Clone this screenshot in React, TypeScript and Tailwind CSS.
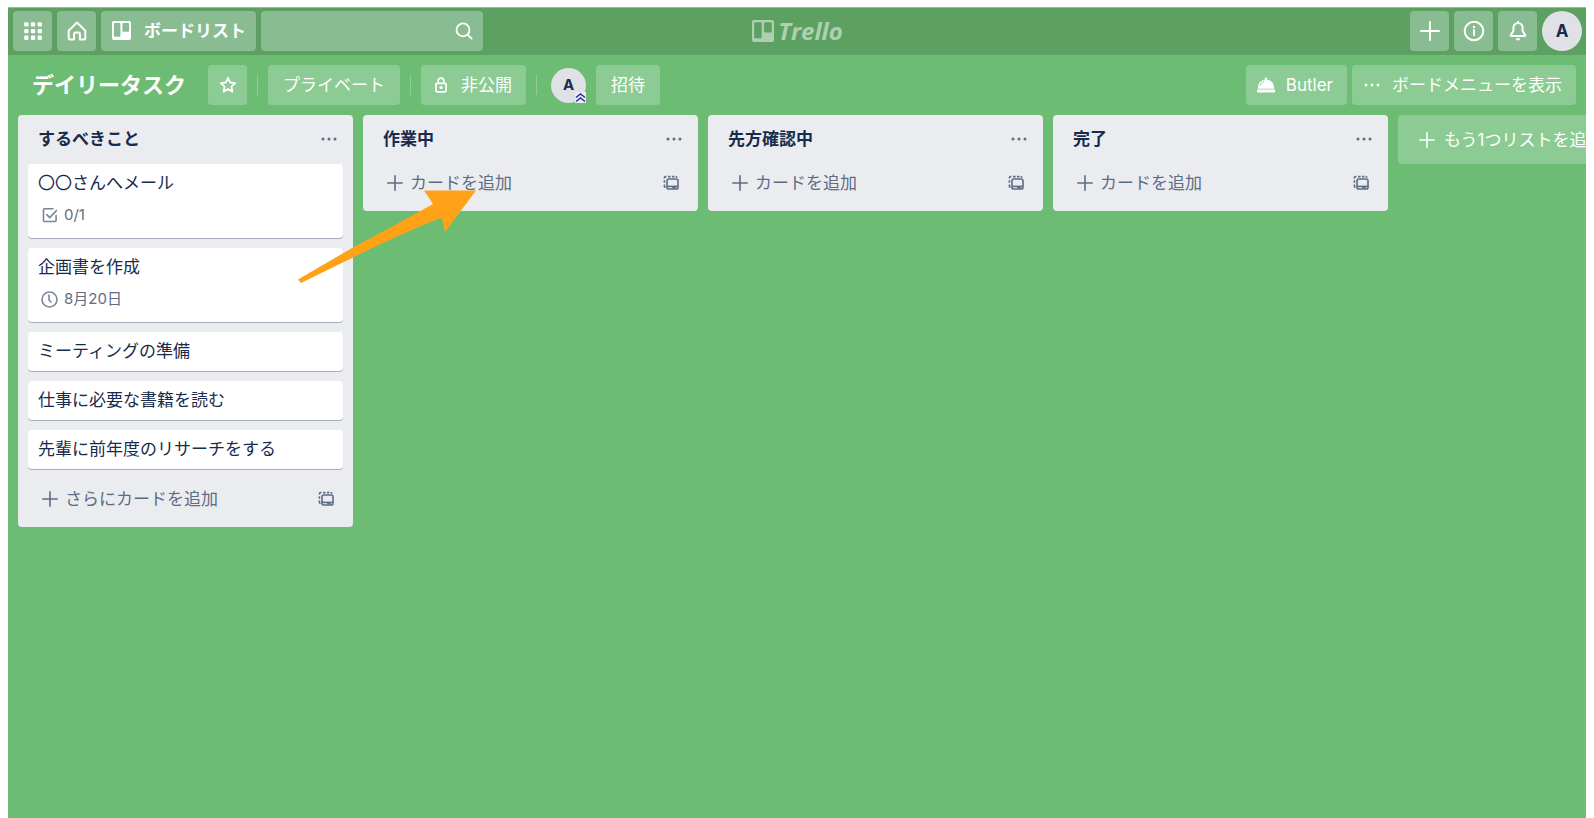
import React from 'react';

type IconProps = { className?: string };

type Card = { title: string; badge?: 'check' | 'clock'; badgeText?: string };
type List = { title: string; cards: Card[]; addLabel: string };

const lists: List[] = [
  {
    title: 'するべきこと',
    addLabel: 'さらにカードを追加',
    cards: [
      { title: '〇〇さんへメール', badge: 'check', badgeText: '0/1' },
      { title: '企画書を作成', badge: 'clock', badgeText: '8月20日' },
      { title: 'ミーティングの準備' },
      { title: '仕事に必要な書籍を読む' },
      { title: '先輩に前年度のリサーチをする' },
    ],
  },
  { title: '作業中', addLabel: 'カードを追加', cards: [] },
  { title: '先方確認中', addLabel: 'カードを追加', cards: [] },
  { title: '完了', addLabel: 'カードを追加', cards: [] },
];

function GridIcon() {
  return (
    <svg className="size-[18px]" viewBox="0 0 18 18" fill="currentColor" aria-hidden="true">
      {[0, 6.7, 13.4].map((y) =>
        [0, 6.7, 13.4].map((x) => <rect key={`${x}-${y}`} x={x + 0.2} y={y + 0.2} width="4.3" height="4.3" rx="1" />),
      )}
    </svg>
  );
}

function HomeIcon() {
  return (
    <svg className="size-5" viewBox="0 0 20 20" fill="none" stroke="currentColor" strokeWidth="2" strokeLinejoin="round" strokeLinecap="round" aria-hidden="true">
      <path d="M1.7 9.6 10 1.500l8.300 8.100v7.400q0 1.500-1.500 1.500h-3.900v-5.600q0-1.500-1.500-1.500H8.600q-1.500 0-1.500 1.500v5.600H3.200q-1.500 0-1.500-1.500z" />
    </svg>
  );
}

function BoardIcon({ className }: IconProps) {
  return (
    <svg className={className} viewBox="0 0 24 24" fill="currentColor" fillRule="evenodd" aria-hidden="true">
      <path d="M2.2 0h19.6A2.200 2.200 0 0 1 24 2.200v19.600a2.200 2.200 0 0 1-2.200 2.200H2.200A2.200 2.200 0 0 1 0 21.800V2.200A2.200 2.200 0 0 1 2.200 0zM3.400 2.400a1 1 0 0 0-1 1v15.600a1 1 0 0 0 1 1h6.200a1 1 0 0 0 1-1V3.400a1 1 0 0 0-1-1zM14.200 2.400a1 1 0 0 0-1 1v9.200a1 1 0 0 0 1 1h6.400a1 1 0 0 0 1-1V3.400a1 1 0 0 0-1-1z" />
    </svg>
  );
}

function SearchIcon() {
  return (
    <svg className="size-5" viewBox="0 0 20 20" fill="none" stroke="currentColor" strokeWidth="2" strokeLinecap="round" aria-hidden="true">
      <circle cx="8.800" cy="8.800" r="7.100" />
      <path d="m14 14 4.300 4.300" />
    </svg>
  );
}

function PlusIcon({ className }: IconProps) {
  return (
    <svg className={className} viewBox="0 0 20 20" fill="none" stroke="currentColor" strokeWidth="2" strokeLinecap="round" aria-hidden="true">
      <path d="M10 1v18M1 10h18" />
    </svg>
  );
}

function InfoIcon() {
  return (
    <svg className="size-[22px]" viewBox="0 0 22 22" fill="none" stroke="currentColor" strokeWidth="2" strokeLinecap="round" aria-hidden="true">
      <circle cx="11" cy="11" r="9.300" />
      <path d="M11 10v5" />
      <circle cx="11" cy="7" r="1.200" fill="currentColor" stroke="none" />
    </svg>
  );
}

function BellIcon() {
  return (
    <svg className="size-5" viewBox="0 0 20 20" fill="none" stroke="currentColor" strokeWidth="2" strokeLinejoin="round" strokeLinecap="round" aria-hidden="true">
      <path d="M10 2a4.600 4.600 0 0 0-4.600 4.600v3.600L3 13.600q-.7 1.300.6 1.300h12.800q1.300 0 .6-1.300l-2.400-3.400V6.600A4.600 4.600 0 0 0 10 2z" />
      <path d="M10 .6v1.200" />
      <path d="M7.800 17.300h4.400a2.200 2.200 0 0 1-4.400 0z" fill="currentColor" stroke="none" />
    </svg>
  );
}

function StarIcon() {
  return (
    <svg className="size-[18px]" viewBox="0 0 18 18" fill="none" stroke="currentColor" strokeWidth="1.800" strokeLinejoin="round" aria-hidden="true">
      <path d="m9 1.800 2.100 4.700 5.100.6-3.800 3.500 1 5L9 13.100l-4.400 2.500 1-5L1.800 7.100l5.100-.6z" />
    </svg>
  );
}

function LockIcon() {
  return (
    <svg className="h-4 w-3" viewBox="0 0 12 16" fill="none" stroke="currentColor" strokeWidth="1.700" aria-hidden="true">
      <rect x=".9" y="6.400" width="10.200" height="8.400" rx="1.200" />
      <path d="M3.100 6.400V4a2.900 2.900 0 0 1 5.800 0v2.400" />
      <circle cx="6" cy="10.600" r="1.600" fill="currentColor" stroke="none" />
    </svg>
  );
}

function ButlerIcon() {
  return (
    <svg className="h-4 w-[18px]" viewBox="0 0 18 16" fill="currentColor" aria-hidden="true">
      <circle cx="9" cy="1.700" r="1.300" />
      <path d="M.8 11.700C.8 6 4.200 2.600 9 2.600s8.200 3.400 8.200 9.100z" />
      <rect x="0" y="12.500" width="18" height="3" rx=".5" />
      <path d="M3 8.400q1-3.200 3.800-4.300" fill="none" stroke="#8ccb93" strokeWidth=".9" strokeLinecap="round" />
    </svg>
  );
}

function DotsIcon() {
  return (
    <svg className="h-1 w-4" viewBox="0 0 16 4" fill="currentColor" aria-hidden="true">
      <circle cx="2" cy="2" r="1.500" />
      <circle cx="8" cy="2" r="1.500" />
      <circle cx="14" cy="2" r="1.500" />
    </svg>
  );
}

function TemplateIcon() {
  return (
    <svg className="size-4" viewBox="0 0 16 16" fill="none" stroke="currentColor" strokeWidth="1.600" aria-hidden="true">
      <rect x="4" y="4" width="11" height="10" rx="1.800" />
      <path d="M4 11.400h11" />
      <path d="M9.200 12.600h3.600" strokeWidth="2" />
      <path d="M1.400 3.600V2.800Q1.400 1.600 2.600 1.600H3.400M5 1.600h2.600M9 1.600h2.400M1.400 5.200v2.600M1.400 9.400v2q0 .9 1.200.9M12.600 1.600q1.200 0 1.200 1.200" />
    </svg>
  );
}

function CheckIcon() {
  return (
    <svg className="size-4" viewBox="0 0 16 16" fill="none" stroke="currentColor" strokeWidth="1.600" strokeLinecap="round" strokeLinejoin="round" aria-hidden="true">
      <path d="M11 1.800H2.500q-1 0-1 1v10.700q0 1 1 1h10.600q1 0 1-1V8.600" />
      <path d="m4.800 7.600 2.900 3 6.700-7" />
    </svg>
  );
}

function ClockIcon() {
  return (
    <svg className="size-[17px]" viewBox="0 0 17 17" fill="none" stroke="currentColor" strokeWidth="1.600" strokeLinecap="round" strokeLinejoin="round" aria-hidden="true">
      <circle cx="8.500" cy="8.500" r="7.500" />
      <path d="M8 4v5l2 2" />
    </svg>
  );
}

function IconButton({ label, children }: { label: string; children: React.ReactNode }) {
  return (
    <button type="button" aria-label={label} className="flex h-10 w-[39px] shrink-0 items-center justify-center rounded bg-[#8abc92]">
      {children}
    </button>
  );
}

function Divider() {
  return <span className="mx-[10px] h-5 w-px bg-white/25" />;
}

function CardItem({ card }: { card: Card }) {
  return (
    <li className="rounded bg-white px-[10px] pt-[7px] pb-2 shadow-[0_1px_0_#a5adba]">
      <p className="leading-6">{card.title}</p>
      {card.badge && (
        <div className="mt-2 mb-[3px] flex h-6 items-center gap-[6px] pl-[3px] text-[15px] text-[#5e6c84]">
          <span className="flex w-[17px] justify-center text-[#7a869a]">{card.badge === 'check' ? <CheckIcon /> : <ClockIcon />}</span>
          <span>{card.badgeText}</span>
        </div>
      )}
    </li>
  );
}

function ListColumn({ list }: { list: List }) {
  return (
    <section className="w-[335px] shrink-0 rounded bg-[#ebecf0] px-[10px] pb-[9px]">
      <div className="flex h-12 items-center justify-between px-[10px]">
        <h2 className="font-bold">{list.title}</h2>
        <button type="button" aria-label="リストメニュー" className="-mr-1 text-[#5e6c84]">
          <DotsIcon />
        </button>
      </div>
      {list.cards.length > 0 && (
        <ul className="flex flex-col gap-[10px] pt-px pb-[10px]">
          {list.cards.map((card) => (
            <CardItem key={card.title} card={card} />
          ))}
        </ul>
      )}
      <div className="flex h-[39px] items-center justify-between pr-[9px] pl-[14px] text-[#5e6c84]">
        <button type="button" className="flex items-center gap-[7px]">
          <PlusIcon className="size-4" />
          {list.addLabel}
        </button>
        <button type="button" aria-label="テンプレートから作成">
          <TemplateIcon />
        </button>
      </div>
    </section>
  );
}

export default function App() {
  return (
    <div className="flex min-h-screen flex-col bg-white px-2 pt-[7px] font-['Inter','Noto_Sans_CJK_JP',sans-serif] text-[17px] leading-6 text-[#172b4d]">
      <div className="flex min-w-0 grow flex-col overflow-hidden bg-[#6dbc74]">
        <header className="grid h-12 grid-cols-[1fr_auto_1fr] items-center border-t border-[#8fbd94] bg-[#5ca162] pr-1 pb-[2px] pl-[5px] text-white">
          <div className="flex gap-[5px]">
            <IconButton label="アプリ"><GridIcon /></IconButton>
            <IconButton label="ホーム"><HomeIcon /></IconButton>
            <button type="button" className="flex h-10 w-[155px] shrink-0 items-center gap-[13px] rounded bg-[#8abc92] pl-[11px] font-bold">
              <BoardIcon className="size-[19px]" />
              ボードリスト
            </button>
            <label className="flex h-10 w-[222px] items-center rounded bg-[#8abc92] pr-[10px] pl-3">
              <input type="text" aria-label="検索" className="w-full min-w-0 bg-transparent outline-none" />
              <SearchIcon />
            </label>
          </div>
          <a href="#" className="flex items-center gap-1 text-[#aed0b1]">
            <BoardIcon className="size-[22px]" />
            <span className="font-['Open_Sans',sans-serif] text-[24px] font-bold italic">Trello</span>
          </a>
          <div className="flex justify-end gap-[5px]">
            <IconButton label="作成"><PlusIcon className="size-5" /></IconButton>
            <IconButton label="情報"><InfoIcon /></IconButton>
            <IconButton label="通知"><BellIcon /></IconButton>
            <button type="button" className="size-10 shrink-0 rounded-full bg-[#dfe1e6] font-bold text-[#172b4d]">A</button>
          </div>
        </header>

        <div className="flex h-[60px] shrink-0 items-center justify-between pr-[10px] pl-6 whitespace-nowrap text-white">
          <div className="flex items-center">
            <h1 className="mr-[22px] text-[22px] font-bold">デイリータスク</h1>
            <button type="button" aria-label="スター" className="flex h-10 w-[39px] items-center justify-center rounded bg-[#8ccb93]">
              <StarIcon />
            </button>
            <Divider />
            <button type="button" className="h-10 rounded bg-[#8ccb93] px-[15px]">プライベート</button>
            <Divider />
            <button type="button" className="flex h-10 items-center gap-[14px] rounded bg-[#8ccb93] px-[14px]">
              <LockIcon />
              非公開
            </button>
            <Divider />
            <button type="button" className="relative mr-[10px] ml-1 size-[35px] rounded-full bg-[#dfe1e6] text-[15px] font-bold text-[#172b4d]">
              A
              <svg className="absolute right-0 bottom-0 size-[11px] bg-[#ebecf0]" viewBox="0 0 11 11" fill="none" stroke="#2a2ab0" strokeWidth="1.500" aria-hidden="true">
                <path d="M1 5.500 5.500 2 10 5.500M1 9.500 5.500 6 10 9.500" />
              </svg>
            </button>
            <button type="button" className="h-10 rounded bg-[#8ccb93] px-[15px]">招待</button>
          </div>
          <div className="flex gap-[5px]">
            <button type="button" className="flex h-10 items-center gap-[11px] rounded bg-[#8ccb93] pr-[14px] pl-[11px]">
              <ButlerIcon />
              Butler
            </button>
            <button type="button" className="flex h-10 items-center gap-3 rounded bg-[#8ccb93] pr-[14px] pl-3">
              <DotsIcon />
              ボードメニューを表示
            </button>
          </div>
        </div>

        <main className="relative flex grow items-start gap-[10px] overflow-x-auto pl-[10px] [scrollbar-width:none]">
          {lists.map((list) => (
            <ListColumn key={list.title} list={list} />
          ))}
          <button type="button" className="flex h-[49px] w-[335px] shrink-0 items-center gap-[9px] rounded bg-[#8ccb93] pl-[21px] text-white">
            <PlusIcon className="size-4" />
            もう1つリストを追加
          </button>
          <svg className="pointer-events-none absolute top-[75px] left-[290px] h-[94px] w-[178px]" viewBox="0 0 178 94" fill="#ffa217" aria-hidden="true">
            <path d="M0 89.500 54 58 98 34.500 135 14 126 .500H178L147 42 143.500 27.500Q100 45 60 65L3 93z" />
          </svg>
        </main>
      </div>
    </div>
  );
}
